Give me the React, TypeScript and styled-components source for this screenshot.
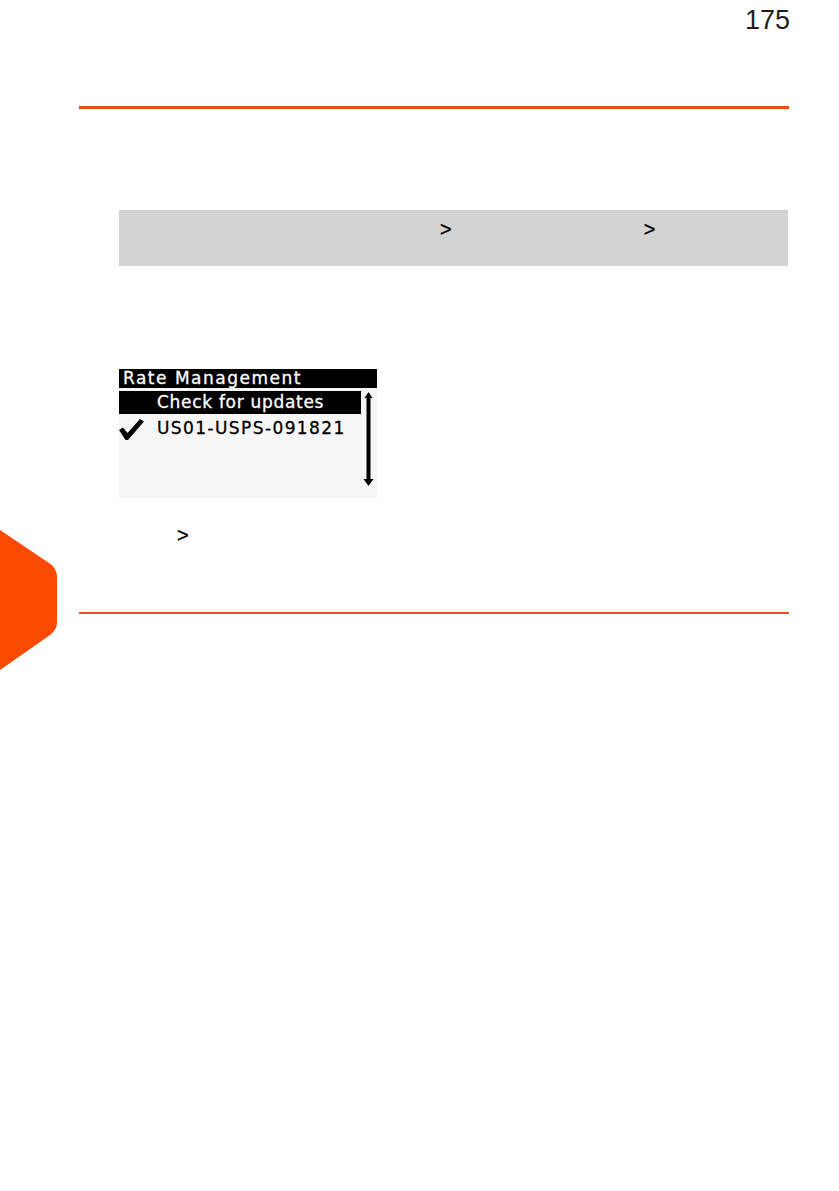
import React from "react";
import styled, { createGlobalStyle } from "styled-components";

const Global = createGlobalStyle`
  html, body { margin: 0; padding: 0; background: #ffffff; }
  body { font-family: "Liberation Sans", Arial, sans-serif; }
`;

const Page = styled.div`
  position: relative;
  width: 839px;
  height: 1191px;
  background: #ffffff;
  overflow: hidden;
`;

const Header = styled.header`
  box-sizing: border-box;
  height: 106px;
  display: flex;
  justify-content: flex-end;
  align-items: flex-start;
  padding: 4px 49px 0 0;
`;

const PageNumber = styled.span`
  font-family: "Liberation Sans", Arial, sans-serif;
  font-size: 27px;
  line-height: 32px;
  color: #231f20;
`;

const Rule = styled.div<{ $top: number }>`
  height: 2.5px;
  width: 710px;
  margin: ${(p) => p.$top}px 0 0 79px;
  background: #e2501c;
`;

const PathBox = styled.div`
  box-sizing: border-box;
  width: 669px;
  height: 56px;
  margin: 101px 0 0 119px;
  background: #d3d3d3;
  border-top: 1px solid #cdcdcd;
  display: flex;
  gap: 192px;
  padding: 7px 0 0 321px;
`;

const Chevron = styled.span`
  font-family: "Liberation Sans", Arial, sans-serif;
  font-size: 20px;
  line-height: 22px;
  color: #000;
  -webkit-text-stroke: 0.3px #000;
`;

const Lcd = styled.div`
  width: 258px;
  height: 129px;
  margin: 103px 0 0 119px;
  background: #f6f6f6;
  display: flex;
  flex-direction: column;
  font-family: "DejaVu Sans", "Liberation Sans", sans-serif;
`;

const LcdTitle = styled.div`
  height: 19px;
  background: #000;
  color: #fff;
  font-size: 17px;
  line-height: 18px;
  letter-spacing: 1.5px;
  padding-left: 4px;
  white-space: nowrap;
  -webkit-text-stroke: 0.3px #fff;
`;

const LcdBody = styled.div`
  display: grid;
  grid-template-columns: 242px 1fr;
  padding-top: 3px;
`;

const LcdList = styled.div`
  display: flex;
  flex-direction: column;
`;

const LcdRow = styled.div<{ $selected?: boolean }>`
  position: relative;
  height: 23px;
  display: flex;
  align-items: center;
  padding-left: 38px;
  font-size: 17px;
  letter-spacing: ${(p) => (p.$selected ? "0.7px" : "1.4px")};
  white-space: nowrap;
  color: ${(p) => (p.$selected ? "#fff" : "#000")};
  -webkit-text-stroke: 0.3px ${(p) => (p.$selected ? "#fff" : "#000")};
  background: ${(p) => (p.$selected ? "#000" : "transparent")};
  margin-bottom: 3px;
`;

const Tick = styled.svg`
  position: absolute;
  left: 0;
  top: 2px;
`;

const ScrollTrack = styled.svg`
  display: block;
`;

const StepLine = styled.div`
  margin: 26px 0 0 177px;
  height: 22px;
  display: flex;
  align-items: center;
`;

const SideTab = styled.svg`
  position: absolute;
  left: 0;
  top: 530px;
`;

export default function App() {
  return (
    <>
      <Global />
      <Page>
        <Header>
          <PageNumber>175</PageNumber>
        </Header>
        <Rule $top={0} />
        <PathBox>
          <Chevron>&gt;</Chevron>
          <Chevron>&gt;</Chevron>
        </PathBox>
        <Lcd>
          <LcdTitle>Rate Management</LcdTitle>
          <LcdBody>
            <LcdList>
              <LcdRow $selected>Check for updates</LcdRow>
              <LcdRow>
                <Tick width="25" height="22" viewBox="0 0 25 22">
                  <path d="M0 11 L4 8.5 L8.5 14 L21 0 L25 2.5 L9 21 L6.5 21 Z" fill="#000" />
                </Tick>
                US01-USPS-091821
              </LcdRow>
            </LcdList>
            <ScrollTrack width="16" height="104" viewBox="0 0 16 104">
              <polygon points="3.5,7 7.5,1 11.5,7" fill="#000" />
              <rect x="5.5" y="5" width="4" height="84" fill="#000" />
              <polygon points="2.5,88 12.5,88 7.5,95" fill="#000" />
            </ScrollTrack>
          </LcdBody>
        </Lcd>
        <StepLine>
          <Chevron>&gt;</Chevron>
        </StepLine>
        <Rule $top={66} />
        <SideTab width="58" height="140" viewBox="0 0 58 140">
          <path d="M0 0 L49 33 Q57 38 57 47 L57 92 Q57 100 50 105 L0 140 Z" fill="#fc4a03" />
        </SideTab>
      </Page>
    </>
  );
}
